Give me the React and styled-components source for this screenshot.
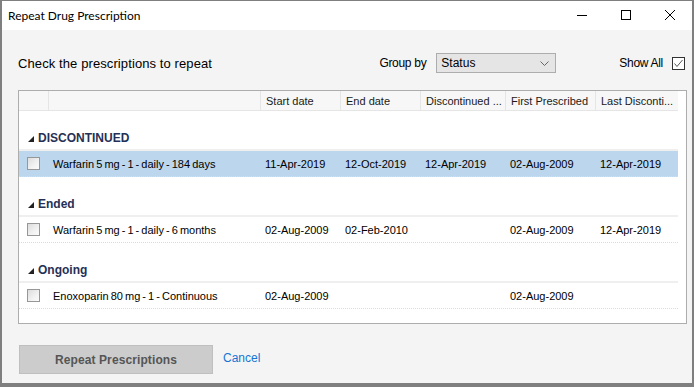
import React from "react";
import styled, { createGlobalStyle } from "styled-components";

const Global = createGlobalStyle`
  html, body { margin: 0; padding: 0; background: #ffffff; }
  * { box-sizing: border-box; }
`;

const Window = styled.div`
  width: 694px;
  height: 387px;
  border-style: solid;
  border-color: #7f7f7f;
  border-width: 1px 2px 4px 2px;
  display: flex;
  flex-direction: column;
  background: #f4f4f4;
  font-family: "Liberation Sans", Arial, sans-serif;
  color: #000;
`;

const TitleBar = styled.div`
  height: 29px;
  background: #fff;
  display: flex;
  align-items: center;
  padding-left: 6px;
  flex-shrink: 0;
`;

const Title = styled.div`
  flex: 1;
  font-family: "Segoe UI", "Lato", sans-serif;
  font-size: 12px;
  color: #000;
`;

const WinControls = styled.div`
  display: flex;
  height: 100%;
`;

const WinButton = styled.div`
  width: 44px;
  height: 100%;
  display: flex;
  align-items: center;
  justify-content: center;
  margin-top: -1px;
`;

const Content = styled.div`
  flex: 1;
  display: flex;
  flex-direction: column;
  padding: 0 7px 0 16px;
`;

const TopRow = styled.div`
  height: 20px;
  margin-top: 23px;
  display: flex;
  align-items: center;
`;

const Instruction = styled.div`
  font-size: 13px;
  flex: 1;
  padding-top: 1px;
  letter-spacing: 0.1px;
`;

const Label = styled.div`
  font-size: 12px;
  letter-spacing: -0.3px;
  margin-right: ${(p) => p.$mr || 0}px;
`;

const Select = styled.div`
  width: 120px;
  height: 20px;
  border: 1px solid #adadad;
  background: #e5e5e5;
  display: flex;
  align-items: center;
  padding-left: 4px;
  padding-right: 6px;
  font-size: 12px;
  margin-right: 63px;
  justify-content: space-between;
`;

const Check = styled.div`
  width: 13px;
  height: 13px;
  border: 1px solid ${(p) => (p.$dark ? "#333" : "#979797")};
  background: ${(p) =>
    p.$dark ? "#fff" : "linear-gradient(135deg, #dcdcdc 0%, #f2f2f2 60%, #fbfbfb 100%)"};
  display: flex;
  align-items: center;
  justify-content: center;
  flex-shrink: 0;
`;

const List = styled.div`
  margin-top: 17px;
  width: 669px;
  height: 234px;
  border: 1px solid #adadad;
  background: #fff;
  display: flex;
  flex-direction: column;
`;

const HeaderRow = styled.div`
  display: flex;
  height: 20px;
  width: 659px;
  background: #f7f7f7;
  border-bottom: 1px solid #e5e5e5;
  font-size: 11px;
  color: #1a1a1a;
`;

const HeaderCell = styled.div`
  width: ${(p) => p.$w}px;
  flex-shrink: 0;
  padding-left: 5px;
  display: flex;
  align-items: center;
  white-space: nowrap;
  overflow: hidden;
  border-left: ${(p) => (p.$first ? "none" : "1px solid #e5e5e5")};
  height: 100%;
`;

const Group = styled.div`
  display: flex;
  flex-direction: column;
  width: 659px;
`;

const GroupHeader = styled.div`
  height: 40px;
  display: flex;
  align-items: flex-end;
  padding-left: 9px;
  padding-bottom: 4px;
  border-bottom: 2px solid #efefef;
  font-size: 12px;
  font-weight: bold;
  color: #263056;
  gap: 4px;
`;

const Row = styled.div`
  height: 26px;
  display: flex;
  align-items: center;
  font-size: 11px;
  word-spacing: -1px;
  background: ${(p) => (p.$selected ? "#bcd6ee" : "#fff")};
  border-bottom: 1px dotted #dcdcdc;
`;

const Cell = styled.div`
  width: ${(p) => p.$w}px;
  flex-shrink: 0;
  padding-left: ${(p) => p.$pl ?? 5}px;
  white-space: nowrap;
  overflow: hidden;
  display: flex;
  align-items: center;
`;

const Footer = styled.div`
  margin-top: 21px;
  display: flex;
  align-items: center;
  gap: 10px;
  padding-left: 1px;
`;

const Button = styled.div`
  width: 194px;
  height: 29px;
  background: #cccccc;
  border: 1px solid #bfbfbf;
  display: flex;
  align-items: center;
  justify-content: center;
  font-size: 12px;
  font-weight: bold;
  color: #555;
  font-family: "Liberation Sans", Arial, sans-serif;
  letter-spacing: 0.1px;
`;

const LinkText = styled.div`
  font-size: 12px;
  color: #1574d4;
  margin-top: -3px;
`;

const cols = [
  { w: 29 },
  { w: 212 },
  { w: 80, t: "Start date" },
  { w: 80, t: "End date" },
  { w: 85, t: "Discontinued ..." },
  { w: 90, t: "First Prescribed" },
  { w: 83, t: "Last Disconti..." },
];

const groups = [
  {
    name: "DISCONTINUED",
    rows: [
      {
        sel: true,
        vals: ["Warfarin 5 mg - 1 - daily - 184 days", "11-Apr-2019", "12-Oct-2019", "12-Apr-2019", "02-Aug-2009", "12-Apr-2019"],
      },
    ],
  },
  {
    name: "Ended",
    rows: [
      { vals: ["Warfarin 5 mg - 1 - daily - 6 months", "02-Aug-2009", "02-Feb-2010", "", "02-Aug-2009", "12-Apr-2019"] },
    ],
  },
  {
    name: "Ongoing",
    rows: [{ vals: ["Enoxoparin 80 mg - 1 - Continuous", "02-Aug-2009", "", "", "02-Aug-2009", ""] }],
  },
];

const Triangle = () => (
  <svg width="6" height="6" viewBox="0 0 6 6" style={{ marginBottom: 3 }}>
    <polygon points="6,0 6,6 0,6" fill="#222" />
  </svg>
);

export default function App() {
  return (
    <>
      <Global />
      <Window>
        <TitleBar>
          <Title>Repeat Drug Prescription</Title>
          <WinControls>
            <WinButton>
              <svg width="10" height="10" viewBox="0 0 10 10">
                <line x1="0" y1="5.5" x2="10" y2="5.5" stroke="#000" strokeWidth="1" />
              </svg>
            </WinButton>
            <WinButton>
              <svg width="10" height="10" viewBox="0 0 10 10">
                <rect x="0.5" y="0.5" width="9" height="9" fill="none" stroke="#000" strokeWidth="1" />
              </svg>
            </WinButton>
            <WinButton>
              <svg width="10" height="10" viewBox="0 0 10 10">
                <path d="M0 0 L10 10 M10 0 L0 10" stroke="#000" strokeWidth="1" />
              </svg>
            </WinButton>
          </WinControls>
        </TitleBar>
        <Content>
          <TopRow>
            <Instruction>Check the prescriptions to repeat</Instruction>
            <Label $mr={10}>Group by</Label>
            <Select>
              <span>Status</span>
              <svg width="9" height="5" viewBox="0 0 9 5">
                <polyline points="0.5,0.5 4.5,4.5 8.5,0.5" fill="none" stroke="#666" strokeWidth="1" />
              </svg>
            </Select>
            <Label $mr={9}>Show All</Label>
            <Check $dark>
              <svg width="11" height="11" viewBox="0 0 11 11">
                <polyline points="1.5,5.5 4,8.5 9.5,2" fill="none" stroke="#555" strokeWidth="1" />
              </svg>
            </Check>
          </TopRow>
          <List>
            <HeaderRow>
              {cols.map((c, i) => (
                <HeaderCell key={i} $w={c.w} $first={i === 0}>
                  {c.t || ""}
                </HeaderCell>
              ))}
            </HeaderRow>
            {groups.map((g) => (
              <Group key={g.name}>
                <GroupHeader>
                  <Triangle />
                  <span>{g.name}</span>
                </GroupHeader>
                {g.rows.map((r, ri) => (
                  <Row key={ri} $selected={r.sel}>
                    <Cell $w={29} $pl={8}>
                      <Check />
                    </Cell>
                    {r.vals.map((v, vi) => (
                      <Cell key={vi} $w={cols[vi + 1].w}>
                        {v}
                      </Cell>
                    ))}
                  </Row>
                ))}
              </Group>
            ))}
          </List>
          <Footer>
            <Button>Repeat Prescriptions</Button>
            <LinkText>Cancel</LinkText>
          </Footer>
        </Content>
      </Window>
    </>
  );
}
